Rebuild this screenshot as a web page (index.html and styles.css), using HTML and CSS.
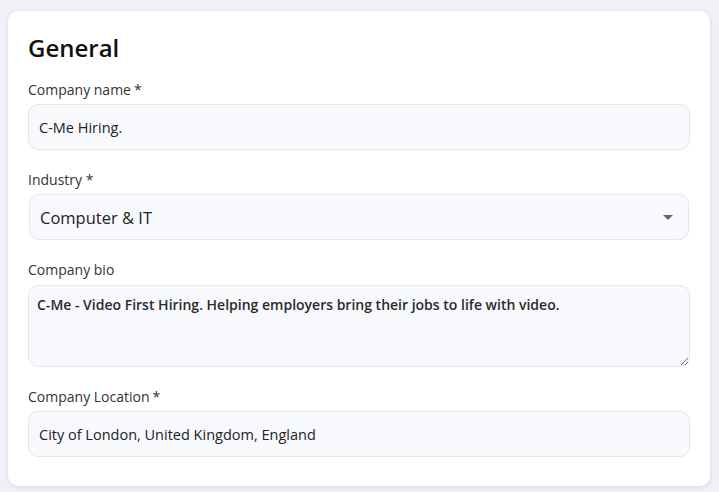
FILE: index.html
```html
<!DOCTYPE html>
<html lang="en">
<head>
  <meta charset="UTF-8">
  <meta name="viewport" content="width=device-width, initial-scale=1.0">
  <title>Company profile - General</title>
  <link rel="stylesheet" href="styles.css">
</head>
<body>
  <div class="card">
    <h2>General</h2>

    <!-- Company name -->
    <label class="field-label" for="companyName">Company name<span class="req">*</span></label>
    <input class="field" type="text" id="companyName" value="C-Me Hiring.">

    <!-- Industry -->
    <label class="field-label gap" for="industry">Industry *</label>
    <div class="select-wrap">
      <select class="field select" id="industry">
        <option>Computer &amp; IT</option>
        <option>Finance</option>
        <option>Healthcare</option>
      </select>
      <span class="caret"></span>
    </div>

    <!-- Company bio -->
    <label class="field-label gap" for="bio">Company bio</label>
    <textarea class="field bio" id="bio">C-Me - Video First Hiring. Helping employers bring their jobs to life with video.</textarea>

    <!-- Company location -->
    <label class="field-label gap" for="location">Company Location<span class="req">*</span></label>
    <input class="field" type="text" id="location" value="City of London, United Kingdom, England">
  </div>
</body>
</html>
```

FILE: styles.css
```css
/* base */
body {
  font-family: "Open Sans", "Noto Sans", sans-serif;
  margin: 0;
  padding: 11px 9px 6px 8px;
  background-color: #f0f1f7;
  color: #222;
}
.card {
  background: #fff;
  border-radius: 10px;
  box-shadow: 0 1px 4px rgba(30, 35, 60, 0.12);
  padding: 21px 20px 29px 20px;
  display: flex;
  flex-direction: column;
}
h2 {
  margin: 0 0 16px;
  font-size: 24px;
  line-height: 32px;
  font-weight: 600;
  color: #111;
}
.field-label {
  font-size: 14px;
  line-height: 20px;
  color: #333;
  margin-bottom: 4px;
}
.field-label.gap {
  margin-top: 20px;
}
.req {
  margin-left: 3px;
}
.field {
  box-sizing: border-box;
  width: 100%;
  height: 46px;
  margin: 0;
  padding: 0 10px;
  font-family: inherit;
  font-size: 14.5px;
  color: #222;
  background-color: #f8f9fd;
  border: 1px solid #e4e6ee;
  border-radius: 10px;
  outline: none;
}
/* select */
.select-wrap {
  position: relative;
  padding: 0 1px;
}
.select {
  appearance: none;
  font-size: 16.5px;
  padding-left: 10px;
}
.caret {
  position: absolute;
  right: 17px;
  top: 21px;
  width: 0;
  height: 0;
  border-left: 5px solid transparent;
  border-right: 5px solid transparent;
  border-top: 5px solid #666;
  pointer-events: none;
}
/* textarea */
.bio {
  height: 82px;
  padding: 9px 8px;
  font-size: 14px;
  font-weight: 600;
  line-height: 20px;
  color: #2a2a2a;
  resize: vertical;
  margin-top: 1px;
}
```
